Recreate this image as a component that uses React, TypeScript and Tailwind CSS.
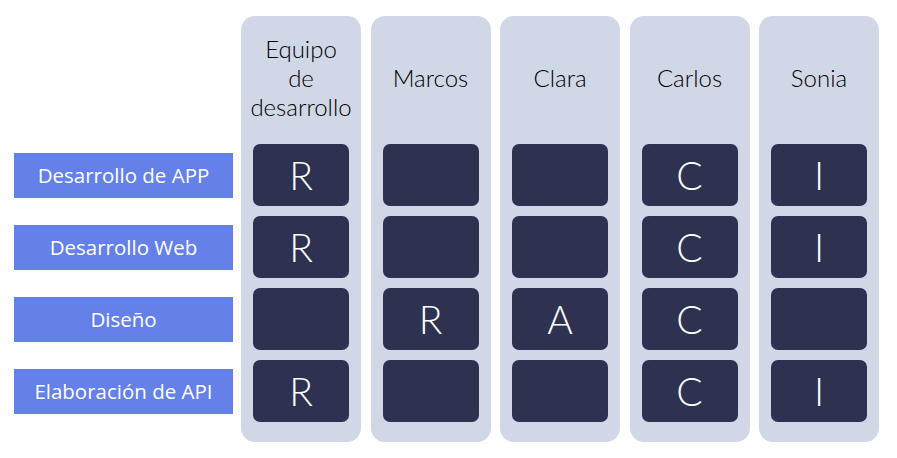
import React from "react";

const tasks = ["Desarrollo de APP", "Desarrollo Web", "Diseño", "Elaboración de API"];
const cols: { name: string[]; cells: string[] }[] = [
  { name: ["Equipo", "de", "desarrollo"], cells: ["R", "R", "", "R"] },
  { name: ["Marcos"], cells: ["", "", "R", ""] },
  { name: ["Clara"], cells: ["", "", "A", ""] },
  { name: ["Carlos"], cells: ["C", "C", "C", "C"] },
  { name: ["Sonia"], cells: ["I", "I", "", "I"] },
];

export default function App() {
  return (
    <div className="w-[897px] h-[458px] bg-white flex overflow-hidden">
      <div className="w-[241px] shrink-0 pl-[14px] pt-[144px] flex flex-col gap-[10px]">
        {tasks.map((t) => (
          <div key={t} className="h-[62px] flex items-center">
            <div
              className="w-[219px] h-[45px] bg-[#6480e9] text-white flex items-center justify-center text-[20.5px]"
              style={{ fontFamily: '"Open Sans", "Noto Sans", sans-serif' }}
            >
              {t}
            </div>
          </div>
        ))}
      </div>
      <div className="flex gap-[9.5px] pt-[16px]">
        {cols.map((c, i) => (
          <div key={i} className="w-[120px] h-[426px] rounded-[14px] bg-[#d0d7e7] px-[12px] flex flex-col">
            <div
              className="h-[128px] pb-[5px] flex flex-col items-center justify-center text-[24px] leading-[29px] font-light text-black text-center"
              style={{ fontFamily: 'Lato, sans-serif' }}
            >
              {c.name.map((n) => (
                <span key={n}>{n}</span>
              ))}
            </div>
            <div className="flex flex-col gap-[10px]">
              {c.cells.map((v, j) => (
                <div
                  key={j}
                  className="h-[62px] rounded-[7px] bg-[#2c3250] text-white flex items-center justify-center text-[39px] font-light"
                  style={{ fontFamily: 'Lato, sans-serif' }}
                >
                  {v}
                </div>
              ))}
            </div>
          </div>
        ))}
      </div>
    </div>
  );
}
